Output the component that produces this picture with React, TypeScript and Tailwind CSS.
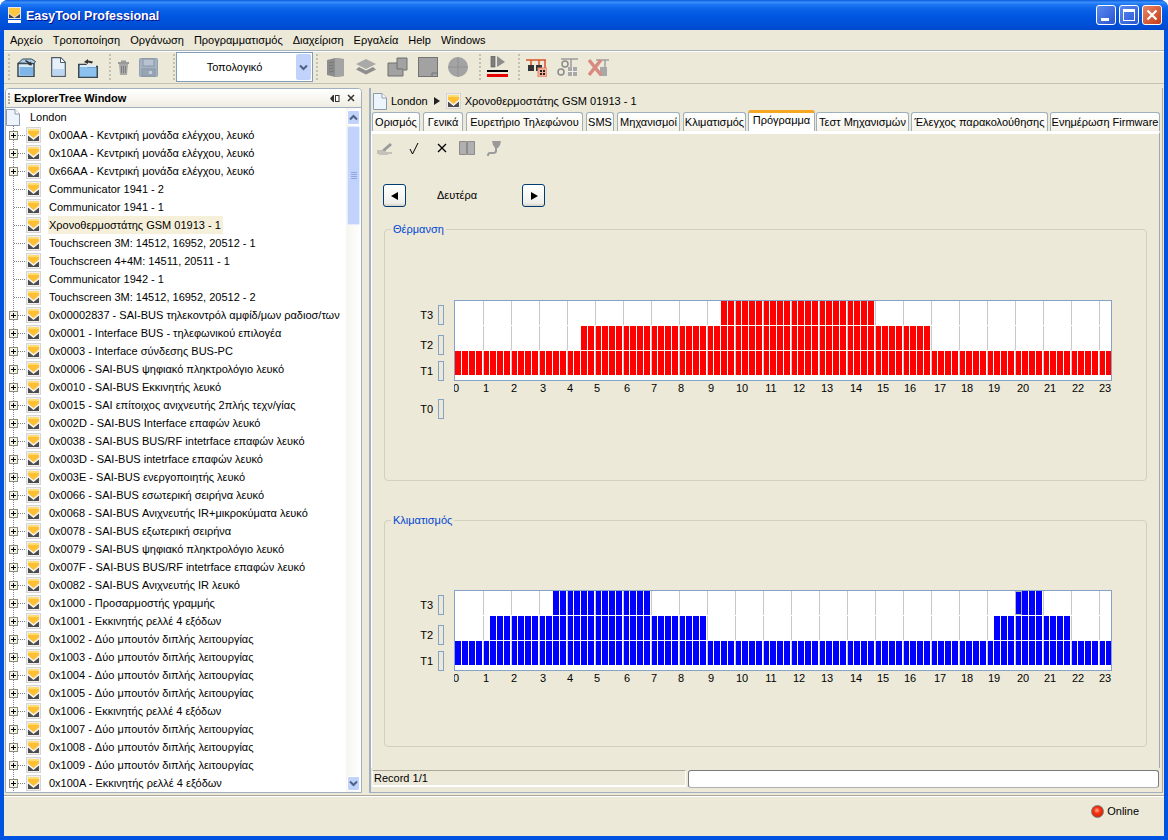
import React from "react";

const treeItems: [boolean, string][] = [
  [true, "0x00AA - Κεντρική μονάδα ελέγχου, λευκό"],
  [true, "0x10AA - Κεντρική μονάδα ελέγχου, λευκό"],
  [true, "0x66AA - Κεντρική μονάδα ελέγχου, λευκό"],
  [false, "Communicator 1941 - 2"],
  [false, "Communicator 1941 - 1"],
  [false, "Χρονοθερμοστάτης GSM 01913 - 1"],
  [false, "Touchscreen 3M: 14512, 16952, 20512 - 1"],
  [false, "Touchscreen 4+4M: 14511, 20511 - 1"],
  [false, "Communicator 1942 - 1"],
  [false, "Touchscreen 3M: 14512, 16952, 20512 - 2"],
  [true, "0x00002837 - SAI-BUS τηλεκοντρόλ αμφίδ/μων ραδιοσ/των"],
  [true, "0x0001 - Interface BUS - τηλεφωνικού επιλογέα"],
  [true, "0x0003 - Interface σύνδεσης BUS-PC"],
  [true, "0x0006 - SAI-BUS ψηφιακό πληκτρολόγιο λευκό"],
  [true, "0x0010 - SAI-BUS Εκκινητής λευκό"],
  [true, "0x0015 - SAI επίτοιχος ανιχνευτής 2πλής τεχν/γίας"],
  [true, "0x002D - SAI-BUS Interface επαφών λευκό"],
  [true, "0x0038 - SAI-BUS BUS/RF intetrface επαφών λευκό"],
  [true, "0x003D - SAI-BUS intetrface επαφών λευκό"],
  [true, "0x003E - SAI-BUS ενεργοποιητής λευκό"],
  [true, "0x0066 - SAI-BUS εσωτερική σειρήνα λευκό"],
  [true, "0x0068 - SAI-BUS Ανιχνευτής IR+μικροκύματα λευκό"],
  [true, "0x0078 - SAI-BUS εξωτερική σειρήνα"],
  [true, "0x0079 - SAI-BUS ψηφιακό πληκτρολόγιο λευκό"],
  [true, "0x007F - SAI-BUS BUS/RF intetrface επαφών λευκό"],
  [true, "0x0082 - SAI-BUS Ανιχνευτής IR λευκό"],
  [true, "0x1000 - Προσαρμοστής γραμμής"],
  [true, "0x1001 - Εκκινητής ρελλέ 4 εξόδων"],
  [true, "0x1002 - Δύο μπουτόν διπλής λειτουργίας"],
  [true, "0x1003 - Δύο μπουτόν διπλής λειτουργίας"],
  [true, "0x1004 - Δύο μπουτόν διπλής λειτουργίας"],
  [true, "0x1005 - Δύο μπουτόν διπλής λειτουργίας"],
  [true, "0x1006 - Εκκινητής ρελλέ 4 εξόδων"],
  [true, "0x1007 - Δύο μπουτόν διπλής λειτουργίας"],
  [true, "0x1008 - Δύο μπουτόν διπλής λειτουργίας"],
  [true, "0x1009 - Δύο μπουτόν διπλής λειτουργίας"],
  [true, "0x100A - Εκκινητής ρελλέ 4 εξόδων"],
];

const tabs: [string, string][] = [
  ["Ορισμός", "w-[48px]"],
  ["Γενικά", "w-[40px]"],
  ["Ευρετήριο Τηλεφώνου", "w-[117px]"],
  ["SMS", "w-[28px]"],
  ["Μηχανισμοί", "w-[63px]"],
  ["Κλιματισμός", "w-[63px]"],
];
const tabsAfter: [string, string][] = [
  ["Τεστ Μηχανισμών", "w-[93px]"],
  ["Έλεγχος παρακολούθησης", "w-[137px]"],
  ["Ενημέρωση Firmware", "w-[110px]"],
];

const labelX = [456, 486, 514, 543, 570, 597, 627, 654, 681, 711, 742, 771, 799, 827, 856, 883, 910, 940, 967, 994, 1023, 1050, 1078, 1105];

// row 0 = T3, row 1 = T2, row 2 = T1, ranges are quarter hour slots
const heating: [number, number, number][] = [
  [0, 38, 60],
  [1, 18, 68],
  [2, 0, 96],
];
const cooling: [number, number, number][] = [
  [0, 14, 28],
  [0, 80, 84],
  [1, 5, 36],
  [1, 77, 88],
  [2, 0, 96],
];

function DeviceIcon() {
  return (
    <svg width="15" height="16" viewBox="0 0 15 16" className="shrink-0">
      <rect x="0" y="0" width="15" height="16" fill="#d4d4d4" />
      <rect x="1" y="1" width="13" height="14" fill="#f0f0f0" />
      <path d="M2 2h11v4.500L7.500 11 2 6.500z" fill="#fdbf34" />
      <path d="M2 2h11v2H2z" fill="#fedc72" />
      <path d="M2 8l5.500 4.500L13 8v6H2z" fill="#4c4c4c" />
      <path d="M1.500 7.500l6 5 6-5" fill="none" stroke="#fff" strokeWidth="1" />
    </svg>
  );
}

function DocIcon() {
  return (
    <svg width="14" height="17" viewBox="0 0 14 17" className="shrink-0">
      <path d="M.5.5h8.5l4.5 4.5v11.500H.5z" fill="#eef4fb" stroke="#8d9bb0" />
      <path d="M9 .5v4.500h4.500" fill="#fff" stroke="#8d9bb0" />
    </svg>
  );
}

function Connector({ plus }: { plus: boolean }) {
  return (
    <svg width="20" height="18" viewBox="0 0 20 18" className="shrink-0">
      <path d="M7.500 0V18" stroke="#808080" strokeDasharray="1 1" />
      <path d="M8 9.500H20" stroke="#808080" strokeDasharray="1 1" />
      {plus && (
        <g>
          <rect x="3.500" y="5.500" width="8" height="8" fill="#f4f2e8" stroke="#8c8c7c" />
          <path d="M5 9.500h5M7.500 7v5" stroke="#000" />
        </g>
      )}
    </svg>
  );
}

function Grip() {
  return (
    <div className="flex flex-col gap-[2px] w-[2px] shrink-0">
      {[0, 1, 2, 3, 4, 5, 6].map((i) => (
        <div key={i} className="w-[2px] h-[2px] bg-[#c4c1ae]" />
      ))}
    </div>
  );
}

function Grip2() {
  return (
    <div className="flex flex-col gap-[1px] w-[2px] shrink-0">
      {[0, 1, 2, 3].map((i) => (
        <div key={i} className="w-[2px] h-[2px] bg-[#a8a698]" />
      ))}
    </div>
  );
}

function Chevron({ up }: { up?: boolean }) {
  return (
    <svg width="9" height="7" viewBox="0 0 9 7">
      <path d={up ? "M1 5.500l3.500-3.500 3.500 3.500" : "M1 1.500l3.500 3.500 3.500-3.500"} fill="none" stroke="#4d6185" strokeWidth="2" />
    </svg>
  );
}

function Chart({ rows, color, mark }: { rows: [number, number, number][]; color: string; mark?: number }) {
  const ox = 454;
  const bars: React.ReactNode[] = [];
  const lines: React.ReactNode[] = [];
  for (let h = 1; h < 24; h++) {
    const x = 455 + 28 * h - ox;
    [[1, 25], [26, 50], [51, 75]].forEach(([a, b]) => {
      lines.push(<rect key={`l${h}-${a}`} x={x} y={a} width="1" height={b - a} fill="#c8c8c8" />);
    });
  }
  rows.forEach(([row, from, to]) => {
    for (let s = from; s < to; s++) {
      const h = Math.floor(s / 4);
      const q = s % 4;
      const L = 455 + 28 * h - ox;
      const x = q === 0 ? (h === 0 ? L : L + 1) : L + 7 * q;
      const w = q === 0 && h > 0 ? 5 : 6;
      const y = 1 + row * 25;
      if (x >= 657) continue;
      bars.push(<rect key={`${row}-${s}`} x={x} y={y} width={Math.min(w, 657 - x)} height="24" fill={color} />);
      if (s === mark && row === 0) {
        bars.push(<rect key="mark" x={x - 0.5} y={y + 0.5} width={w + 1} height="23" fill="none" stroke="#b4b4b4" />);
      }
    }
  });
  return (
    <svg width="658" height="96" viewBox="0 0 658 96" className="shrink-0 block">
      <rect x="0.500" y="0.500" width="657" height="80" fill="#fff" stroke="#84a3c7" />
      {lines}
      {bars}
      {labelX.map((x, i) => (
        <text key={i} x={x - ox} y="92" textAnchor="middle" fontSize="11" fill="#000">
          {i}
        </text>
      ))}
    </svg>
  );
}

function TRow({ label, className }: { label: string; className: string }) {
  return (
    <div className={`flex items-center justify-end gap-[5px] ${className}`}>
      <span className="text-[11px] leading-none">{label}</span>
      <div className="w-[6px] h-[20px] border border-[#84a3c7]" />
    </div>
  );
}

function GroupBox({ title, className, children }: { title: string; className: string; children: React.ReactNode }) {
  return (
    <div className={`relative ml-[12px] w-[763px] border border-[#d4d0bd] rounded-[4px] ${className}`}>
      <span className="absolute left-[6px] top-[-8px] px-[2px] bg-[#ece9d8] text-[#0046d5] text-[11px] leading-[14px]">{title}</span>
      {children}
    </div>
  );
}

function NavButton({ dir }: { dir: "l" | "r" }) {
  return (
    <button className="w-[23px] h-[23px] border border-[#003c74] rounded-[3px] bg-[linear-gradient(180deg,#ffffff,#f0f0ea_85%,#d6d0c5)] flex items-center justify-center">
      <svg width="8" height="8" viewBox="0 0 8 8">
        <path d={dir === "l" ? "M7 0v8L0 4z" : "M1 0v8l7-4z"} fill="#000" />
      </svg>
    </button>
  );
}

function ToolbarIcons() {
  return (
    <div className="flex items-center h-[32px]">
      <div className="ml-[4px]"><Grip /></div>
      <svg width="20" height="20" viewBox="0 0 20 20" className="ml-[7px]">
        <path d="M1 6.500h16v13H1z" fill="#dcecf8" stroke="#37474f" strokeWidth="1.500" />
        <path d="M2.500 10H16v8.500H2.500z" fill="#7fb6e8" />
        <path d="M1.500 6l4-4h9l4 2.500-1.500 2z" fill="#a9cdea" stroke="#37474f" />
        <path d="M8 4l4 3-1 1 4 .5-1-4-1 1-4-2.500z" fill="#333" />
      </svg>
      <svg width="15" height="20" viewBox="0 0 15 20" className="ml-[14px]">
        <path d="M.7.700h9l4.600 4.600v14H.700z" fill="#e6f0fa" stroke="#4c5a6a" strokeWidth="1.200" />
        <path d="M2 12h11v6H2z" fill="#bcd7f1" />
        <path d="M9.500 1v4.500H14" fill="#fff" stroke="#4c5a6a" />
      </svg>
      <svg width="20" height="21" viewBox="0 0 20 21" className="ml-[12px]">
        <path d="M.7 7.500h7l2 2h9.600v11H.7z" fill="#8cc0ee" stroke="#37474f" strokeWidth="1.500" />
        <path d="M2 8h16v2H2z" fill="#dcecf8" />
        <path d="M6 5l4-3 0 1.500 5 1-1 2-4-1v1.500z" fill="#333" />
      </svg>
      <div className="ml-[11px]"><Grip /></div>
      <svg width="13" height="15" viewBox="0 0 13 15" className="ml-[6px]">
        <path d="M1 2h11v2H1z M4 .5h5V2H4z" fill="#9a9a9a" />
        <path d="M2 4h9l-1 11H3z" fill="#a8a8a8" />
        <path d="M4.500 6v7M6.500 6v7M8.500 6v7" stroke="#7e7e7e" />
      </svg>
      <svg width="19" height="19" viewBox="0 0 19 19" className="ml-[9px]">
        <rect x="0.500" y="0.500" width="18" height="18" rx="1" fill="#a4b2c3" stroke="#93a0b0" />
        <rect x="4" y="1" width="11" height="7" fill="#b8c3d0" stroke="#8896a6" />
        <rect x="3" y="11" width="13" height="7" fill="#98a5b5" stroke="#8896a6" />
        <rect x="10" y="13" width="3" height="3" fill="#c4ced9" />
      </svg>
      <div className="ml-[15px]"><Grip /></div>
      <div className="ml-[1px] w-[137px] h-[30px] border border-[#7f9db9] bg-white flex">
        <span className="flex-1 text-center text-[11px] leading-[28px] pr-[3px]">Τοπολογικό</span>
        <div className="w-[15px] m-[1px] rounded-[2px] bg-[#c1d3fb] flex items-center justify-center">
          <Chevron />
        </div>
      </div>
      <div className="ml-[3px]"><Grip /></div>
      <svg width="17" height="20" viewBox="0 0 17 20" className="ml-[9px]">
        <path d="M0 3l8-2 9 1v17l-9 1-8-2z" fill="#8d8d8d" />
        <path d="M8 1l9 1v17l-9 1z" fill="#a4a4a4" />
        <path d="M2 6l5-1M2 9l5-1M2 12l5-1M2 15l5-1" stroke="#777" />
      </svg>
      <svg width="20" height="16" viewBox="0 0 20 16" className="ml-[12px]">
        <path d="M10 0l10 5-10 5L0 5z" fill="#a9a9a9" />
        <path d="M3 8l7 3.500L17 8l3 2.500-10 5-10-5z" fill="#8e8e8e" />
      </svg>
      <svg width="21" height="20" viewBox="0 0 21 20" className="ml-[11px]">
        <path d="M1 6h9V1h10v12h-4v6H1z" fill="#a2a2a2" stroke="#6f6f6f" />
        <path d="M10 6v6h6" fill="none" stroke="#6f6f6f" />
      </svg>
      <svg width="20" height="20" viewBox="0 0 20 20" className="ml-[10px]">
        <rect x="0.500" y="0.500" width="19" height="19" fill="#a2a2a2" stroke="#747474" />
        <path d="M14 19v-3h5" fill="none" stroke="#747474" />
      </svg>
      <svg width="20" height="20" viewBox="0 0 20 20" className="ml-[10px]">
        <circle cx="10" cy="10" r="10" fill="#a3a3a3" />
        <path d="M10 0v20M0 10h20" stroke="#929292" />
      </svg>
      <div className="ml-[11px]"><Grip /></div>
      <svg width="21" height="22" viewBox="0 0 21 22" className="ml-[6px]">
        <rect x="4" y="0" width="4" height="11" fill="#7f7f7f" stroke="#555" strokeWidth="0.600" />
        <path d="M10 0l8 6-8 5z" fill="#8d8d8d" />
        <rect x="0" y="14" width="21" height="2" fill="#000" />
        <rect x="0" y="18" width="21" height="3" fill="#e60000" />
      </svg>
      <div className="ml-[10px]"><Grip /></div>
      <svg width="21" height="19" viewBox="0 0 21 19" className="ml-[6px]">
        <path d="M0 2h20M5 2v6M13 2v6M19 2v8" stroke="#d8532c" strokeWidth="1.500" fill="none" />
        <rect x="2" y="7" width="6" height="6" fill="#333" />
        <rect x="10" y="7" width="6" height="6" fill="#333" />
        <rect x="12" y="10" width="9" height="9" fill="#f4b09a" stroke="#e88468" />
        <path d="M14 12h2v2h-2zM17 12h2v2h-2zM14 15h2v2h-2zM17 15h2v2h-2z" fill="#222" />
      </svg>
      <svg width="21" height="20" viewBox="0 0 21 20" className="ml-[10px]">
        <path d="M4 2h17M14 2v8" stroke="#9a9a9a" strokeWidth="1.500" fill="none" />
        <circle cx="8" cy="7" r="3" fill="none" stroke="#8a8a8a" strokeWidth="1.500" />
        <circle cx="4" cy="15" r="3" fill="none" stroke="#8a8a8a" strokeWidth="1.500" />
        <path d="M11 10h9v9h-9z" fill="#a8a8a8" />
        <path d="M15.500 10v9M11 14.500h9" stroke="#eee" />
      </svg>
      <svg width="21" height="19" viewBox="0 0 21 19" className="ml-[10px]">
        <path d="M8 2h13M17 2v7" stroke="#a0a0a0" strokeWidth="1.500" fill="none" />
        <rect x="12" y="9" width="7" height="9" fill="#a8a8a8" />
        <path d="M1 2l12 15M13 2L1 17" stroke="#d98a80" strokeWidth="3.500" />
      </svg>
    </div>
  );
}

function SubToolbar() {
  return (
    <div className="flex items-center h-[16px] mt-[6px] ml-[5px]">
      <svg width="16" height="14" viewBox="0 0 16 14">
        <path d="M0 12h15M0 10h9M2 14h9" stroke="#9a9a9a" />
        <path d="M5 9l8-7 2 2-7 6z" fill="#9a9a9a" />
      </svg>
      <svg width="10" height="13" viewBox="0 0 10 13" className="ml-[16px]">
        <path d="M1 7l2.500 5L9 1" fill="none" stroke="#000" strokeWidth="1" />
      </svg>
      <svg width="10" height="10" viewBox="0 0 10 10" className="ml-[18px]">
        <path d="M1 1l8 8M9 1l-8 8" stroke="#000" strokeWidth="1.300" />
      </svg>
      <svg width="16" height="14" viewBox="0 0 16 14" className="ml-[12px]">
        <path d="M.500.500h7v13h-7zM8.500.500h7v13h-7z" fill="#b0b0b0" stroke="#8c8c8c" />
      </svg>
      <svg width="16" height="17" viewBox="0 0 16 17" className="ml-[11px]">
        <path d="M6 1h9l-1 4-2 3H9L7 5z" fill="#9a9a9a" />
        <path d="M10 8v3q0 2-3 2H4q-2 0-2 3" fill="none" stroke="#9a9a9a" strokeWidth="2" />
      </svg>
    </div>
  );
}

export default function App() {
  return (
    <div className="w-[1168px] h-[840px] overflow-hidden bg-white font-['Liberation_Sans',sans-serif] text-black">
      <div className="h-full flex flex-col rounded-t-[8px] overflow-hidden bg-[#0053e0]">
        {/* title bar */}
        <div className="h-[30px] shrink-0 flex items-center pl-[8px] pr-[2px] bg-[linear-gradient(180deg,#0a5ce0_0%,#3b8ff8_8%,#1f78f4_14%,#0a62e8_30%,#0056e0_55%,#0050d8_80%,#0048cc_100%)]">
          <svg width="13" height="17" viewBox="0 0 13 17">
            <rect x="0" y="0" width="13" height="12" fill="#e8e8e8" />
            <path d="M1 1h11v5l-5.500 4L1 6z" fill="#fdc63f" />
            <path d="M1 7l5.500 4L12 7v4H1z" fill="#444" />
            <rect x="0" y="13" width="13" height="3" fill="#fff" />
          </svg>
          <span className="ml-[5px] mt-[3px] text-white font-bold text-[12.500px] leading-none [text-shadow:1px_1px_0_#0f1089]">EasyTool Professional</span>
          <div className="ml-auto flex gap-[3px] mr-[4px]">
            <div className="w-[20px] h-[20px] rounded-[3px] border border-white bg-[linear-gradient(135deg,#5a8af0,#2a55d0)] flex items-end pl-[4px] pb-[3px]">
              <div className="w-[8px] h-[3px] bg-white" />
            </div>
            <div className="w-[20px] h-[20px] rounded-[3px] border border-white bg-[linear-gradient(135deg,#5a8af0,#2a55d0)] flex items-center justify-center">
              <div className="w-[12px] h-[12px] border border-white border-t-[3px]" />
            </div>
            <div className="w-[20px] h-[20px] rounded-[3px] border border-white bg-[linear-gradient(135deg,#e8866a,#c63c14)] flex items-center justify-center">
              <svg width="12" height="12" viewBox="0 0 12 12">
                <path d="M1.500 1.500l9 9M10.500 1.500l-9 9" stroke="#fff" strokeWidth="2.200" />
              </svg>
            </div>
          </div>
        </div>

        <div className="flex-1 mx-[4px] mb-[4px] bg-[#ece9d8] flex flex-col min-h-0 text-[11px]">
          {/* menu */}
          <div className="h-[20px] shrink-0 flex items-center pl-[6px] gap-[10px] leading-none">
            <span>Αρχείο</span>
            <span>Τροποποίηση</span>
            <span>Οργάνωση</span>
            <span>Προγραμματισμός</span>
            <span>Διαχείριση</span>
            <span>Εργαλεία</span>
            <span>Help</span>
            <span>Windows</span>
          </div>
          {/* toolbar */}
          <div className="h-[34px] shrink-0 border-t border-[#aab3b8] border-b border-b-[#c4c1ae] shadow-[inset_0_1px_0_#fff]">
            <ToolbarIcons />
          </div>

          <div className="h-[712px] shrink-0 flex border-b border-[#aca899] pt-[4px] pr-[1px]">
            {/* tree panel */}
            <div className="ml-[1px] w-[357px] shrink-0 flex flex-col border border-[#a0b0c0] rounded-t-[4px] overflow-hidden mb-[2px]">
              <div className="h-[19px] shrink-0 flex items-center pl-[2px] pr-[5px] bg-[linear-gradient(180deg,#ffffff,#f0eee2)] border-b border-[#a0b0c0]">
                <Grip2 />
                <span className="ml-[4px] font-bold text-[11px] leading-none">ExplorerTree Window</span>
                <svg width="10" height="9" viewBox="0 0 10 9" className="ml-auto">
                  <path d="M0 4.500L3 1v7z" fill="#333" />
                  <rect x="3" y="1" width="1" height="7" fill="#333" />
                  <rect x="5.500" y="1.500" width="3.500" height="6" fill="#fff" stroke="#333" />
                </svg>
                <svg width="8" height="8" viewBox="0 0 8 8" className="ml-[7px] mr-[1px]">
                  <path d="M1 1l6 6M7 1L1 7" stroke="#333" strokeWidth="1.500" />
                </svg>
              </div>
              <div className="flex-1 min-h-0 flex bg-white">
                <div className="flex-1 min-w-0 overflow-hidden">
                  <div className="h-[18px] flex items-center">
                    <DocIcon />
                    <span className="ml-[10px] leading-none">London</span>
                  </div>
                  {treeItems.map(([plus, name], i) => (
                    <div key={i} className="h-[18px] flex items-center">
                      <Connector plus={plus} />
                      <DeviceIcon />
                      <span className={`ml-[7px] pl-[1px] pr-[2px] h-[18px] leading-[18px] whitespace-nowrap ${i === 5 ? "bg-[#f6f0da]" : ""}`}>{name}</span>
                    </div>
                  ))}
                </div>
                {/* scrollbar */}
                <div className="w-[15px] shrink-0 flex flex-col pt-[2px] pb-[1px] px-[1px] bg-[linear-gradient(90deg,#f6f5ef,#ffffff)]">
                  <div className="h-[15px] shrink-0 rounded-[2px] bg-[#c1d3fb] border border-white flex items-center justify-center"><Chevron up /></div>
                  <div className="h-[99px] shrink-0 mt-[1px] rounded-[2px] bg-[#c1d3fb] border border-[#e4ebfd] flex flex-col items-center justify-center gap-[1px]">
                    <div className="w-[6px] h-[1px] bg-[#8ea6dc]" />
                    <div className="w-[6px] h-[1px] bg-[#8ea6dc]" />
                    <div className="w-[6px] h-[1px] bg-[#8ea6dc]" />
                    <div className="w-[6px] h-[1px] bg-[#8ea6dc]" />
                  </div>
                  <div className="flex-1" />
                  <div className="h-[15px] shrink-0 rounded-[2px] bg-[#c1d3fb] border border-white flex items-center justify-center"><Chevron /></div>
                </div>
              </div>
            </div>

            {/* right panel */}
            <div className="ml-[7px] flex-1 min-w-0 flex flex-col border-l-2 border-[#a0b0c0] border-b border-b-[#a0b0c0] border-r border-r-[#aca899] mb-[2px]">
              <div className="h-[22px] shrink-0 flex items-center pt-[4px] pl-[2px]">
                <DocIcon />
                <span className="ml-[4px] leading-none">London</span>
                <svg width="6" height="8" viewBox="0 0 6 8" className="ml-[6px]">
                  <path d="M0 0v8l6-4z" fill="#222" />
                </svg>
                <div className="ml-[6px]"><DeviceIcon /></div>
                <span className="ml-[4px] leading-none">Χρονοθερμοστάτης GSM 01913 - 1</span>
              </div>
              <div className="h-[21px] shrink-0 flex items-end pl-[1px]">
                <div className="flex gap-[3px]">
                  {tabs.map(([t, w]) => (
                    <div key={t} className={`${w} h-[19px] shrink-0 text-center leading-[19px] whitespace-nowrap border border-b-0 border-[#9fb0bd] rounded-t-[3px] bg-[linear-gradient(180deg,#ffffff,#f4f2e8)]`}>{t}</div>
                  ))}
                </div>
                <div className="ml-[2px] w-[67px] h-[21px] shrink-0 text-center leading-[15px] whitespace-nowrap border-x border-[#9fb0bd] border-t-[3px] border-t-[#f5a623] rounded-t-[3px] bg-white">Πρόγραμμα</div>
                <div className="ml-[1px] flex gap-[2px]">
                  {tabsAfter.map(([t, w]) => (
                    <div key={t} className={`${w} h-[19px] shrink-0 text-center leading-[19px] whitespace-nowrap border border-b-0 border-[#9fb0bd] rounded-t-[3px] bg-[linear-gradient(180deg,#ffffff,#f4f2e8)]`}>{t}</div>
                  ))}
                </div>
              </div>

              <div className="h-[637px] shrink-0 mr-[2px] border-l border-white border-t-[3px] border-t-white border-r border-r-[#a0a8b0]">
                <SubToolbar />
                <div className="flex items-center mt-[28px] ml-[11px]">
                  <NavButton dir="l" />
                  <span className="w-[116px] text-center leading-none pr-[14px]">Δευτέρα</span>
                  <NavButton dir="r" />
                </div>
                <GroupBox title="Θέρμανση" className="h-[252px] mt-[22px] pt-[70px] flex items-start">
                  <div className="w-[59px] shrink-0 mr-[10px]">
                    <TRow label="T3" className="mt-[5px]" />
                    <TRow label="T2" className="mt-[10px]" />
                    <TRow label="T1" className="mt-[6px]" />
                    <TRow label="T0" className="mt-[18px]" />
                  </div>
                  <Chart rows={heating} color="#ff0000" />
                </GroupBox>
                <GroupBox title="Κλιματισμός" className="h-[227px] mt-[39px] pt-[69px] flex items-start">
                  <div className="w-[59px] shrink-0 mr-[10px]">
                    <TRow label="T3" className="mt-[5px]" />
                    <TRow label="T2" className="mt-[10px]" />
                    <TRow label="T1" className="mt-[6px]" />
                  </div>
                  <Chart rows={cooling} color="#0000ff" mark={80} />
                </GroupBox>
              </div>

              <div className="mt-[2px] flex pl-[1px] pr-[3px] gap-[2px]">
                <div className="w-[314px] h-[17px] border-t border-[#aca899] border-b-2 border-b-white border-x border-x-white leading-[14px] pl-[1px] shrink-0">Record 1/1</div>
                <div className="flex-1 h-[18px] border border-[#7a7a7a] border-b-[#b0b0b0] rounded-[3px] bg-white" />
              </div>
            </div>
          </div>

          {/* status bar */}
          <div className="flex-1 min-h-0 border-t border-white flex items-center justify-end pr-[25px] pb-[10px]">
            <div className="w-[13px] h-[13px] rounded-full border border-[#777] bg-[radial-gradient(circle_at_45%_40%,#ffb090_0%,#f83010_35%,#c02000_100%)]" />
            <span className="ml-[3px] leading-none">Online</span>
          </div>
        </div>
      </div>
    </div>
  );
}
